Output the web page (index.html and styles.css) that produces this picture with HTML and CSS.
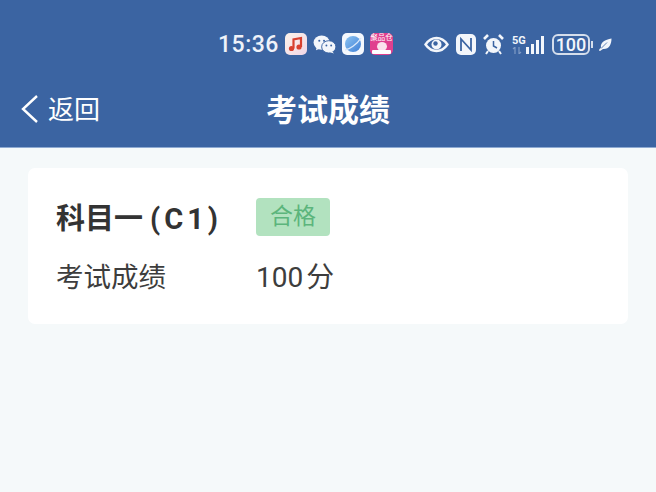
FILE: index.html
```html
<!DOCTYPE html>
<html lang="zh-CN">
<head>
    <meta charset="UTF-8">
    <meta name="viewport" content="width=device-width, initial-scale=1.0">
    <title>考试成绩</title>
    <link rel="stylesheet" href="styles.css">
</head>
<body>
    <div class="top-area">
        <div class="status-bar">
            <span class="clock">15:36</span>
            <div class="app-icons">
                <svg class="icon" width="22" height="22" viewBox="0 0 22 22">
                    <defs>
                        <linearGradient id="musicBg" x1="0" y1="0" x2="1" y2="1">
                            <stop offset="0" stop-color="#fdf3ea"/>
                            <stop offset="1" stop-color="#f0d6e6"/>
                        </linearGradient>
                    </defs>
                    <rect width="22" height="22" rx="5" fill="url(#musicBg)"/>
                    <path d="M8.500 15.500V6.500l7.500-1.500v9" fill="none" stroke="#d8402f" stroke-width="2.200"/>
                    <circle cx="6.500" cy="15.500" r="2.600" fill="#d8402f"/>
                    <circle cx="14" cy="14" r="2.600" fill="#d8402f"/>
                </svg>
                <svg class="icon" width="23" height="19" viewBox="0 0 24 20">
                    <ellipse cx="9" cy="8" rx="8.500" ry="7.500" fill="#f3f6fb"/>
                    <path d="M4 12l-1 4 5-2z" fill="#f3f6fb"/>
                    <ellipse cx="16.500" cy="12.500" rx="7.500" ry="6.500" fill="#f3f6fb" stroke="#3b64a2" stroke-width="1"/>
                    <path d="M20 17l2 2.500-5-1.500z" fill="#f3f6fb"/>
                    <circle cx="6.500" cy="6" r="1.100" fill="#3b64a2"/>
                    <circle cx="11.500" cy="6" r="1.100" fill="#3b64a2"/>
                    <circle cx="14" cy="11" r="1" fill="#3b64a2"/>
                    <circle cx="19" cy="11" r="1" fill="#3b64a2"/>
                </svg>
                <svg class="icon" width="22" height="22" viewBox="0 0 22 22">
                    <defs>
                        <linearGradient id="planet" x1="0" y1="0" x2="1" y2="1">
                            <stop offset="0" stop-color="#8cc4f2"/>
                            <stop offset="1" stop-color="#3f7fd6"/>
                        </linearGradient>
                    </defs>
                    <rect width="22" height="22" rx="5" fill="#f5f8fd"/>
                    <circle cx="11" cy="11" r="8" fill="url(#planet)"/>
                    <path d="M3 17c4-.5 12-5.500 16-12" fill="none" stroke="#dbe9fa" stroke-width="1.400"/>
                </svg>
                <div class="promo-icon">
                    <span class="promo-title">聚品仓</span>
                    <span class="promo-face"></span>
                    <span class="promo-strip"></span>
                </div>
            </div>
            <div class="system-icons">
                <svg class="icon eye" width="25" height="17" viewBox="0 0 25 16">
                    <path d="M1.500 8C5 3 8.500 1.500 12.500 1.500S20 3 23.500 8c-3.500 5-7 6.500-11 6.500S5 13 1.500 8z" fill="none" stroke="#f3f6fb" stroke-width="2.400"/>
                    <circle cx="12.500" cy="8" r="5" fill="#f3f6fb"/>
                    <circle cx="11.500" cy="7" r="2.200" fill="#3b64a2"/>
                </svg>
                <svg class="icon nfc" width="20" height="21" viewBox="0 0 20 21">
                    <rect width="20" height="21" rx="5" fill="#f3f6fb"/>
                    <path d="M5 17V5l10 11V4" fill="none" stroke="#3b64a2" stroke-width="1.800"/>
                </svg>
                <svg class="icon alarm" width="21" height="21" viewBox="0 0 21 21">
                    <circle cx="10.500" cy="11.500" r="7.500" fill="#f3f6fb"/>
                    <path d="M10.500 7v5l3.500 2" fill="none" stroke="#3b64a2" stroke-width="1.500"/>
                    <path d="M1 5l4-4M20 5l-4-4" stroke="#f3f6fb" stroke-width="2.600"/>
                    <path d="M5 17l-2 3M16 17l2 3" stroke="#f3f6fb" stroke-width="2"/>
                </svg>
                <div class="signal">
                    <div class="net-label">
                        <span class="net-type">5G</span>
                        <svg width="10" height="7" viewBox="0 0 10 7"><path d="M3 0v7M3 0L1 2M7 0v7M7 7l2-2" stroke="#7f9bc5" stroke-width="1.200" fill="none"/></svg>
                    </div>
                    <div class="bars">
                        <span class="bar bar-1"></span>
                        <span class="bar bar-2"></span>
                        <span class="bar bar-3"></span>
                        <span class="bar bar-4"></span>
                    </div>
                </div>
                <div class="battery">
                    <span class="battery-body">100</span>
                    <span class="battery-cap"></span>
                </div>
                <svg class="icon leaf" width="14" height="15" viewBox="0 0 14 14">
                    <path d="M1 13c0-1 1-2 2-3C2 5 7 2 13.500 1 13.500 7 11 12 5 11.500L2 13.500z" fill="#f3f6fb"/>
                    <path d="M3 11l6-6" stroke="#3b64a2" stroke-width=".8"/>
                </svg>
            </div>
        </div>
        <div class="nav-bar">
            <div class="back">
                <svg width="19" height="30" viewBox="0 0 19 30">
                    <path d="M17 2L3 15l14 13" fill="none" stroke="#fff" stroke-width="2.400"/>
                </svg>
                <span class="back-text">返回</span>
            </div>
            <div class="nav-title">考试成绩</div>
        </div>
    </div>

    <div class="content">
        <div class="result-card">
            <div class="result-row">
                <div class="subject">科目一<span class="subject-code">(C1)</span></div>
                <div class="pass-tag">合格</div>
            </div>
            <div class="result-row score-row">
                <div class="score-label">考试成绩</div>
                <div class="score-value">100<span class="score-unit">分</span></div>
            </div>
        </div>
    </div>
</body>
</html>
```

FILE: styles.css
```css
* {
    box-sizing: border-box;
}

html, body {
    height: 100%;
}

body {
    margin: 0;
    background: #f5f9fa;
    font-family: "Roboto", "Noto Sans CJK SC", sans-serif;
    color: #333;
    overflow: hidden;
}

/* Header */
.top-area {
    background: #3b64a2;
    height: 148px;
    border-bottom: 1px solid #8eaad2;
    color: #fff;
}

.status-bar {
    height: 72px;
    padding: 16px 0 0 218px;
    display: flex;
    align-items: center;
}

.clock {
    font-size: 23px;
    font-weight: 500;
    letter-spacing: 0.5px;
    color: #eef2f9;
    width: 67px;
}

.icon {
    display: block;
    flex: none;
}

.app-icons {
    display: flex;
    align-items: center;
    gap: 6px;
}

.promo-icon {
    width: 23px;
    height: 22px;
    border-radius: 5px;
    background: #e0408f;
    position: relative;
    overflow: hidden;
}

.promo-title {
    display: block;
    font-size: 7.500px;
    line-height: 10px;
    text-align: center;
    white-space: nowrap;
    color: #fff;
}

.promo-face {
    position: absolute;
    left: 7px;
    top: 9px;
    width: 10px;
    height: 9px;
    border-radius: 50%;
    background: #fbe3ee;
}

.promo-strip {
    position: absolute;
    left: 2px;
    right: 2px;
    bottom: 1px;
    height: 4px;
    background: #fff;
    border-radius: 1px;
}

.system-icons {
    display: flex;
    align-items: center;
    margin-left: 31px;
}

.system-icons .nfc {
    margin-left: 7px;
}

.system-icons .alarm {
    margin-left: 7px;
}

.signal {
    display: flex;
    align-items: flex-end;
    margin-left: 8px;
    height: 20px;
}

.net-label {
    width: 13px;
    display: flex;
    flex-direction: column;
}

.net-type {
    font-size: 11px;
    font-weight: 700;
    line-height: 13px;
    color: #f3f6fb;
}

.bars {
    display: flex;
    align-items: flex-end;
    gap: 2px;
    margin-left: 1px;
}

.bar {
    width: 3px;
    background: #f3f6fb;
}

.bar-1 { height: 7px; }
.bar-2 { height: 10px; }
.bar-3 { height: 14px; }
.bar-4 { height: 18px; }

.battery {
    display: flex;
    align-items: center;
    margin-left: 8px;
}

.battery-body {
    width: 38px;
    height: 21px;
    border: 2px solid #d5deec;
    border-radius: 6px;
    font-size: 18px;
    font-weight: 500;
    line-height: 17px;
    text-align: center;
    color: #f3f6fb;
}

.battery-cap {
    width: 2px;
    height: 7px;
    margin-left: 1px;
    background: #d5deec;
}

.system-icons .leaf {
    margin-left: 5px;
}

.nav-bar {
    height: 75px;
    display: flex;
    align-items: center;
    justify-content: center;
    position: relative;
}

.back {
    position: absolute;
    left: 20px;
    top: 21px;
    display: flex;
    align-items: center;
    gap: 9px;
    font-size: 26px;
    line-height: 30px;
}

.back-text {
    padding-top: 2px;
}

.nav-title {
    font-size: 31px;
    font-weight: 700;
    line-height: 40px;
    margin-top: 2px;
}

/* Result card */
.content {
    padding: 20px 28px;
}

.result-card {
    background: #fff;
    border-radius: 7px;
    height: 156px;
    padding: 30px 28px 0;
}

.result-row {
    display: flex;
    align-items: center;
}

.subject {
    width: 200px;
    padding-top: 4px;
    font-size: 29px;
    font-weight: 700;
    line-height: 34px;
    white-space: nowrap;
}

.subject-code {
    margin-left: 7px;
    letter-spacing: 4px;
}

.pass-tag {
    width: 74px;
    height: 38px;
    border-radius: 4px;
    background: #b2e2bf;
    color: #5cb57c;
    font-size: 23px;
    line-height: 38px;
    text-align: center;
}

.score-row {
    margin-top: 22px;
}

.score-label {
    width: 200px;
    padding-top: 4px;
    font-size: 27.500px;
    line-height: 32px;
    color: #3d3d3d;
}

.score-value {
    padding-top: 4px;
    font-size: 28px;
    line-height: 32px;
    color: #3d3d3d;
}

.score-unit {
    margin-left: 3px;
}
```
